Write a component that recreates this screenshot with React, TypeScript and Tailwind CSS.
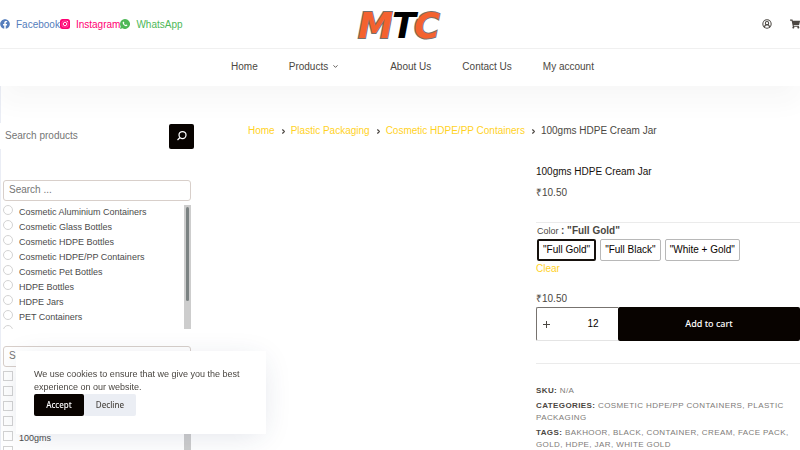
import React, { useState } from "react";
import { FaFacebook, FaShoppingCart } from "react-icons/fa";
import { ChevronDown, ChevronRight, CircleUserRound } from "lucide-react";

const categories = [
    "Cosmetic Aluminium Containers",
    "Cosmetic Glass Bottles",
    "Cosmetic HDPE Bottles",
    "Cosmetic HDPE/PP Containers",
    "Cosmetic Pet Bottles",
    "HDPE Bottles",
    "HDPE Jars",
    "PET Containers",
    "PP Jars",
];

const sizes = ["10gms", "15gms", "25gms", "50gms", "100gms", "150gms"];

const colors = ["Full Gold", "Full Black", "White + Gold"];

const crumbs = ["Home", "Plastic Packaging", "Cosmetic HDPE/PP Containers"];

const tags = ["Bakhoor", "Black", "Container", "Cream", "Face Pack", "Gold", "HDPE", "Jar", "White Gold"];

const Logo = () => (
    <svg viewBox="0 0 90 46" className="h-[46px] w-[90px]" role="img" aria-label="MTC">
        <g fontFamily="DejaVu Sans, sans-serif" fontSize="35" fontWeight="700" fontStyle="italic" style={{ paintOrder: "stroke" }}>
            <text x="3" y="37" fill="#f4622f" stroke="#77706b" strokeWidth="2">M</text>
            <text x="59" y="37" fill="#f4622f" stroke="#77706b" strokeWidth="2">C</text>
            <text x="37" y="37" fill="#000" stroke="#fff" strokeWidth="3">T</text>
        </g>
    </svg>
);

const InstagramIcon = () => (
    <svg viewBox="0 0 20 20" className="size-[10px]" aria-hidden="true">
        <rect width="20" height="20" rx="5" fill="#ff0073" />
        <rect x="4" y="4" width="12" height="12" rx="3" fill="none" stroke="#fff" strokeWidth="1.2" opacity="0.5" />
        <circle cx="10" cy="10" r="3.4" fill="none" stroke="#fff" strokeWidth="1.8" />
        <circle cx="14.6" cy="5.2" r="1.2" fill="#fff" />
    </svg>
);

const WhatsappIcon = () => (
    <svg viewBox="0 0 20 20" className="size-[10px]" aria-hidden="true">
        <path d="M10 0a10 10 0 0 0-8.600 15L0 20l5.100-1.300A10 10 0 1 0 10 0Z" fill="#4eb857" />
        <path d="M7.200 5c-1 .2-1.900 1-1.900 2.500 0 3 4 7 7 7 1.500 0 2.500-1 2.500-2.300l-2.600-1.300-1.100 1.300c-1.500-.6-2.600-1.700-3.200-3.200l1-1.200L7.200 5Z" fill="#fff" />
    </svg>
);

const SearchIcon = () => (
    <svg viewBox="0 0 24 24" className="size-3" fill="none" stroke="#fff" strokeWidth="2.5" aria-hidden="true">
        <circle cx="13" cy="10" r="7" />
        <path d="M8 15l-5 5" />
    </svg>
);

interface FilterListProps {
    name: string;
    type: "radio" | "checkbox";
    items: string[];
}

const FilterList = ({ name, type, items }: FilterListProps) => (
    <div className="mr-[3px] ml-[2px]">
        <input
            type="text"
            aria-label={`Search ${name}`}
            placeholder="Search ..."
            className="block h-[21px] w-full rounded-[3px] border border-[#d8cfca] px-[5px] pb-[2px] text-[10px] outline-none placeholder:text-[#757575]"
        />
        <div className="mt-[4px] flex h-[124px] overflow-hidden">
            <ul className="flex-1">
                {items.map((item) => (
                    <li key={item} className="h-[15px]">
                        <label className="flex items-start gap-[6px] text-[9px] leading-[15px] text-[#4b4b4b]">
                            <input
                                type={type}
                                name={name}
                                className={`size-[10px] shrink-0 appearance-none border border-[#d3d3d3] bg-white ${type === "radio" ? "rounded-full" : "rounded-none"}`}
                            />
                            {item}
                        </label>
                    </li>
                ))}
            </ul>
            <div className="w-[7px] bg-[#cdcdcd] px-[2px] py-[2px]">
                <div className={`rounded-full bg-[#7b8282] ${type === "radio" ? "h-[94px]" : "h-[50px]"}`} />
            </div>
        </div>
    </div>
);

const Header = () => (
    <header className="relative bg-white shadow-[0_15px_25px_rgba(40,40,45,0.04)]">
        <div className="grid h-[49px] grid-cols-[1fr_auto_1fr] items-center border-b border-[#f0f0f0]">
            <div className="flex items-center text-[10px]">
                <a href="#facebook" className="flex items-center gap-[6px] text-[#557dbc]">
                    <FaFacebook size={10} /> Facebook
                </a>
                <a href="#instagram" className="flex items-center gap-[6px] text-[#ff0073]">
                    <InstagramIcon /> Instagram
                </a>
                <a href="#whatsapp" className="flex items-center gap-[6px] text-[#4eb857]">
                    <WhatsappIcon /> WhatsApp
                </a>
            </div>
            <a href="#home"><Logo /></a>
            <div className="flex items-center justify-end gap-[18px] text-[#4b4742]">
                <a href="#account" aria-label="My account"><CircleUserRound size={10} strokeWidth={2.5} /></a>
                <a href="#cart" aria-label="Shopping cart"><FaShoppingCart size={10} /></a>
            </div>
        </div>
        <nav className="flex h-[37px] items-center justify-center gap-[31px] pb-[2px] pl-[25px] text-[10px] text-[#4b4742]">
            <a href="#home">Home</a>
            <a href="#products" className="flex items-center gap-[4px] pr-5">
                Products <ChevronDown size={7} strokeWidth={3} />
            </a>
            <a href="#about">About Us</a>
            <a href="#contact">Contact Us</a>
            <a href="#my-account">My account</a>
        </nav>
    </header>
);

const Sidebar = () => (
    <aside className="w-[194px] shrink-0 border-l border-[#eaedf5] pt-[37px]">
        <form className="-ml-px flex h-[26px] items-center bg-white" onSubmit={(e) => e.preventDefault()}>
            <input
                type="search"
                aria-label="Search products"
                placeholder="Search products"
                className="min-w-0 flex-1 pb-[2px] pl-[5px] text-[10px] outline-none placeholder:text-[#757575]"
            />
            <button type="submit" aria-label="Search" className="flex size-[25px] items-center justify-center rounded-[2px] bg-[#080300]">
                <SearchIcon />
            </button>
        </form>
        <div className="mt-[31px] flex flex-col gap-[17px]">
            <FilterList name="categories" type="radio" items={categories} />
            <FilterList name="sizes" type="checkbox" items={sizes} />
        </div>
    </aside>
);

const Product = () => {
    const [color, setColor] = useState("Full Gold");
    const [qty, setQty] = useState("12");

    return (
        <div className="flex-1">
            <h1 className="text-[10px] leading-[16px] text-[#16110d]">100gms HDPE Cream Jar</h1>
            <p className="mt-[5px] text-[10px] leading-[16px] text-[#4b4742]">₹10.50</p>
            <div className="mt-[21px] border-t border-[#ebebeb]">
                <p className="pt-[1px] pl-[1px] text-[9px] leading-[14px] text-[#4b4742]">
                    Color <b className="text-[10px]">: "{color}"</b>
                </p>
                <div className="mt-[1px] ml-[1px] flex gap-[4px]">
                    {colors.map((c) => (
                        <button
                            key={c}
                            type="button"
                            onClick={() => setColor(c)}
                            className={`h-[22px] rounded-[2px] px-[4px] pb-[2px] text-[10px] text-[#080300] ${c === color ? "border-2 border-[#16110d]" : "border border-[#b8b8b8]"}`}
                        >
                            "{c}"
                        </button>
                    ))}
                </div>
                <a href="#clear" className="block text-[10px] leading-[16px] text-[#ffd21f]">Clear</a>
            </div>
            <p className="mt-[14px] text-[10px] leading-[16px] text-[#4b4742]">₹10.50</p>
            <div className="flex h-[34px]">
                <div className="flex w-[82px] items-center rounded-l-[2px] border border-r-0 border-[#77736f] border-b-[#e4e4e4]">
                    <button type="button" aria-label="Increase quantity" className="flex w-[19px] shrink-0 justify-center" onClick={() => setQty(String(Number(qty) + 1))}>
                        <svg viewBox="0 0 7 7" className="size-[7px]" stroke="#4b4742" aria-hidden="true">
                            <path d="M3.500 0v7M0 3.500h7" />
                        </svg>
                    </button>
                    <input
                        type="text"
                        aria-label="Quantity"
                        value={qty}
                        onChange={(e) => setQty(e.target.value)}
                        className="min-w-0 flex-1 pr-[2px] pb-[2px] pl-[14px] text-center text-[10px] text-[#080300] outline-none"
                    />
                </div>
                <button type="button" className="flex-1 rounded-[2px] bg-[#080300] font-['Noto_Sans',sans-serif] text-[9px] font-medium text-white">
                    Add to cart
                </button>
            </div>
            <div className="mt-[22px] flex flex-col gap-[3px] border-t border-[#ebebeb] pt-[21px] text-[8px] leading-[12px] tracking-wider text-[#7e7b78] uppercase">
                <p><b className="text-[#4b4742]">SKU:</b> N/A</p>
                <p>
                    <b className="text-[#4b4742]">Categories:</b> <a href="#cosmetic">Cosmetic HDPE/PP Containers</a>, <a href="#plastic">Plastic Packaging</a>
                </p>
                <p>
                    <b className="text-[#4b4742]">Tags:</b>{" "}
                    {tags.map((tag, i) => (
                        <React.Fragment key={tag}>
                            {i > 0 && ", "}
                            <a href="#tag">{tag}</a>
                        </React.Fragment>
                    ))}
                </p>
            </div>
        </div>
    );
};

const CookieNotice = () => {
    const [open, setOpen] = useState(true);
    if (!open) return null;

    return (
        <div className="fixed bottom-4 left-4 w-[250px] bg-white px-[18px] pt-[17px] pb-[18px] shadow-[0_5px_30px_-5px_rgba(34,56,101,0.15)]">
            <p className="text-[9px] leading-[13px] text-[#4b4742]">
                We use cookies to ensure that we give you the best experience on our website.
            </p>
            <div className="flex h-[22px] font-['Noto_Sans',sans-serif] text-[8px] font-medium">
                <button type="button" onClick={() => setOpen(false)} className="w-[50px] rounded-[2px] bg-[#080300] text-white">Accept</button>
                <button type="button" onClick={() => setOpen(false)} className="w-[52px] rounded-[2px] bg-[#ebeef4] text-[#4b4742]">Decline</button>
            </div>
        </div>
    );
};

export default function App() {
    return (
        <div className="h-screen overflow-hidden bg-white font-['Liberation_Sans',Arial,sans-serif]">
            <Header />
            <div className="flex">
                <Sidebar />
                <main className="ml-[54px] flex-1 pt-[37px]">
                    <nav aria-label="Breadcrumb" className="flex items-center gap-[5px] text-[10px] leading-[16px] text-[#4b4742]">
                        {crumbs.map((crumb) => (
                            <React.Fragment key={crumb}>
                                <a href="#crumb" className="text-[#ffd21f]">{crumb}</a>
                                <ChevronRight size={7} strokeWidth={4} className="-mr-[1px]" />
                            </React.Fragment>
                        ))}
                        <span>100gms HDPE Cream Jar</span>
                    </nav>
                    <div className="mt-[25px] flex gap-6">
                        <div className="flex-1" />
                        <Product />
                    </div>
                </main>
            </div>
            <CookieNotice />
        </div>
    );
}
